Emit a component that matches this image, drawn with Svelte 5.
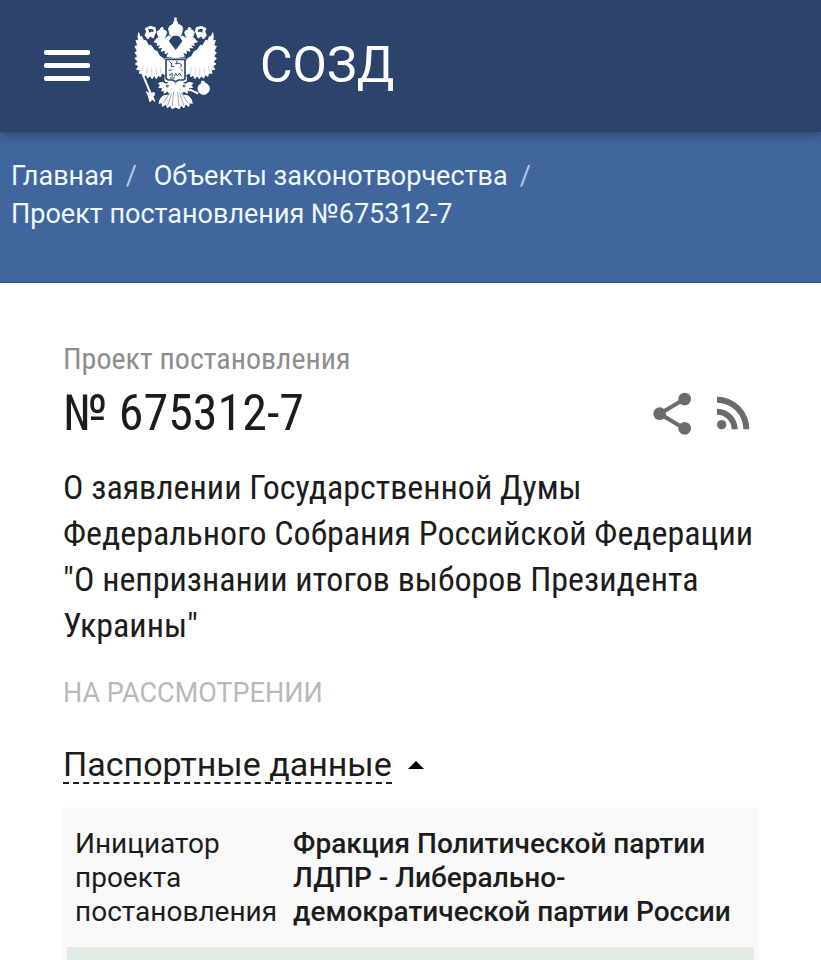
<script>
  let open = $state(true);

  const crumbs = [
    { title: 'Главная', href: '#main' },
    { title: 'Объекты законотворчества', href: '#objects' },
  ];

  const bill = {
    kind: 'Проект постановления',
    number: '675312-7',
    title: 'О заявлении Государственной Думы Федерального Собрания Российской Федерации "О непризнании итогов выборов Президента Украины"',
    status: 'На рассмотрении',
  };

  const passport = [
    {
      name: 'Инициатор проекта постановления',
      value: 'Фракция Политической партии ЛДПР - Либерально-демократической партии России',
    },
    { name: '', value: '' },
  ];
</script>

<header class="topbar">
  <button class="burger" aria-label="Меню">
    <span></span><span></span><span></span>
  </button>
  <a class="brand" href="#main">
    <svg class="eagle" viewBox="40 30 258 285" aria-hidden="true">
      <!-- the left half is drawn once and mirrored -->
      <defs>
        <g id="eagle-half">
          <path d="M57 80 L61 93 L66 91 L72 104 L78 103 L87 119 L94 118 L104 133 L112 136 L120 151 L132 158 L137 167 L137 207 L126 200 L122 213 L116 207 L110 218 L104 209 L97 218 L92 209 L84 216 L80 206 L71 211 L70 201 L59 202 L62 192 L51 190 L57 180 L47 174 L55 167 L46 157 L54 151 L46 140 L53 135 L46 121 L54 119 L49 103 L57 105 L55 92 Z" />
          <path d="M168 134 L151 112 L146 105 L154 94 L148 89 L137 97 L128 92 L113 96 L103 108 L115 110 L112 118 L124 116 L117 126 L129 124 L125 136 L137 132 L136 143 L148 138 L142 151 L168 155 Z" />
          <path d="M116 91 L112 78 L118 72 L123 73 L122 68 L127 63 L131 68 L130 74 L137 73 L141 79 L136 93 Z" />
          <path d="M103 94 L94 89 L97 81 L88 84 L85 95 L79 87 L84 76 L80 69 L92 64 L104 67 L106 76 L99 91" fill="none" stroke-width="8" />
          <path d="M136 212 L136 224 L149 229 L139 235 L128 229 L116 232 L122 238 L117 244 L130 246 L126 255 L134 252 L133 262 L143 256 L151 264 L154 250 L165 242 L168 218 Z" />
          <path d="M168 236 L158 250 L147 267 L130 270 L122 279 L118 292 L128 290 L128 301 L140 294 L143 305 L152 298 L157 308 L168 303 Z" />
          <g fill="none" class="cut">
            <path d="M71 179 L66 194 M83 184 L80 203 M96 184 L96 207 M109 183 L111 207 M121 183 L124 202" stroke-width="2" opacity=".35" />
            <path d="M131 291 L151 260 M144 298 L156 262 M158 300 L162 257" stroke-width="2" opacity=".7" />
            <circle cx="143" cy="240" r="3" />
          </g>
        </g>
      </defs>
      <g class="white">
        <use href="#eagle-half" />
        <use href="#eagle-half" transform="translate(336 0) scale(-1 1)" />
        <path d="M151 87 L147 69 L150 61 L159 55 L163 51 L162 47 L166 44 L165 36 H170 L169 44 L173 47 L172 51 L177 55 L187 61 L189 68 L184 87 Z" />
        <path d="M153 92 Q168 79 183 92" fill="none" stroke-width="5" />
        <path d="M67 200 L96 270" fill="none" stroke-width="6" />
        <path d="M80 257 L91 264 L103 259 L105 267 L100 271 L105 286 L97 279 L91 288 L86 270 Z" />
        <circle cx="252" cy="248" r="17" />
        <path d="M249 236 V224 M244 229 H255 M211 251 L236 263" fill="none" stroke-width="6" />
        <rect x="137" y="157" width="61" height="69" />
      </g>
      <path class="cut" d="M139 160 H196 V219 L190 222 H176 L168 227 L160 222 H145 L139 218 Z" fill="none" stroke-width="5" />
      <path class="cut" d="M149 166 L157 174 L154 181 L164 181 M173 164 L168 174 L178 171 L187 178 L180 185 M147 193 L157 192 M148 208 L158 202 L157 212 M164 211 L168 202 L173 209 L180 201 L185 211 M184 190 L189 196 M151 216 H165" fill="none" stroke-width="3" />
    </svg>
    <span>СОЗД</span>
  </a>
</header>

<nav class="crumbs" aria-label="Навигация">
  {#each crumbs as crumb}
    <a href={crumb.href}>{crumb.title}</a><i>/</i>
  {/each}
  <span class="current">{bill.kind} №{bill.number}</span>
</nav>

<main>
  <div class="kind">{bill.kind}</div>
  <div class="head">
    <h1>№ {bill.number}</h1>
    <div class="actions">
      <button aria-label="Поделиться">
        <svg width="39" height="43" viewBox="68 64 117 129">
          <path d="M163 85 L88 129 L163 174" fill="none" stroke="#6b6b6b" stroke-width="12" />
          <circle cx="163" cy="85" r="19" /><circle cx="88" cy="129" r="19" /><circle cx="163" cy="173" r="19" />
        </svg>
      </button>
      <a href="#rss" aria-label="RSS">
        <svg width="34" height="34" viewBox="258 80 102 102">
          <circle cx="275" cy="166" r="14" />
          <path d="M261 118 A62 62 0 0 1 323 180 H305 A44 44 0 0 0 261 136 Z M261 82 A97 98 0 0 1 358 180 H340 A79 80 0 0 0 261 100 Z" />
        </svg>
      </a>
    </div>
  </div>
  <p class="title">{bill.title}</p>
  <div class="status">{bill.status}</div>

  <button class="toggle" aria-expanded={open} onclick={() => (open = !open)}>
    <span>Паспортные данные</span>
    <svg class:closed={!open} width="16" height="8" viewBox="0 0 16 8"><path d="M0 8 L8 0 L16 8 Z" /></svg>
  </button>

  {#if open}
    <div class="card">
      <table>
        <tbody>
          {#each passport as row}
            <tr>
              <th scope="row">{row.name}</th>
              <td>{row.value}</td>
            </tr>
          {/each}
        </tbody>
      </table>
    </div>
  {/if}
</main>

<style>
  :global(body) { margin: 0; background: #fff; color: #1c1c1c; font-family: Roboto, "Noto Sans", sans-serif; overflow-x: hidden; }
  button { padding: 0; border: 0; background: none; color: inherit; font: inherit; cursor: pointer; }
  a { color: inherit; text-decoration: none; }
  svg { display: block; }

  .topbar { position: relative; display: flex; align-items: center; gap: 43px; height: 132px; padding: 0 44px 2px; box-sizing: border-box; background: #2c446b; color: #fff; box-shadow: 0 2px 10px rgba(30, 50, 80, 0.7); }
  .burger { display: flex; flex-direction: column; gap: 8px; }
  .burger span { width: 46px; height: 5px; border-radius: 2px; background: #fff; }
  .brand { display: flex; align-items: center; gap: 41px; font-size: 50px; line-height: 64px; }
  .eagle { width: 86px; height: 95px; margin-bottom: 4px; }
  .white { fill: #fff; stroke: #fff; stroke-width: 3; stroke-linejoin: round; }
  .cut { stroke: #2c446b; }

  .crumbs { min-height: 151px; padding: 25px 11px 0; box-sizing: border-box; background: #41659d; color: #eef8ff; font-size: 27px; line-height: 38px; border-bottom: 1px solid #35578c; }
  .crumbs i { margin: 0 12px; color: #b4c8e2; font-style: normal; }
  .crumbs a + i + a { margin-left: 5px; }
  .current { display: block; }

  main { padding: 56px 63px 0; }
  .kind, h1, .title { font-family: "Roboto Condensed", "Liberation Sans Narrow", Roboto, sans-serif; }
  .kind { color: #8e8e8e; font-size: 30px; line-height: 40px; }
  .head { display: flex; align-items: center; justify-content: space-between; }
  h1 { margin: 0; font-size: 50px; line-height: 68px; font-weight: 400; }
  .actions { display: flex; align-items: center; gap: 24px; margin-right: 8px; fill: #6b6b6b; }
  .title { margin: 17px 0 0; font-size: 34px; line-height: 46px; }
  .status { margin-top: 25px; color: #b9b9b9; font-size: 27px; line-height: 40px; text-transform: uppercase; }
  .toggle { display: flex; align-items: center; gap: 16px; margin-top: 33px; font-size: 34px; line-height: 36px; }
  .toggle span { border-bottom: 2px dashed #1c1c1c; }
  .closed { transform: rotate(180deg); }

  .card { margin-top: 25px; padding: 4px; background: #f9f9f9; box-shadow: 0 0 3px rgba(0, 0, 0, 0.06); }
  table { width: 100%; border-collapse: collapse; font-size: 28px; line-height: 34px; }
  th, td { padding: 14px 8px 18px; text-align: left; vertical-align: top; }
  th { width: 201px; font-weight: 400; }
  td { font-weight: 500; }
  tr:nth-child(even) { background: #e1ece5; }
</style>
